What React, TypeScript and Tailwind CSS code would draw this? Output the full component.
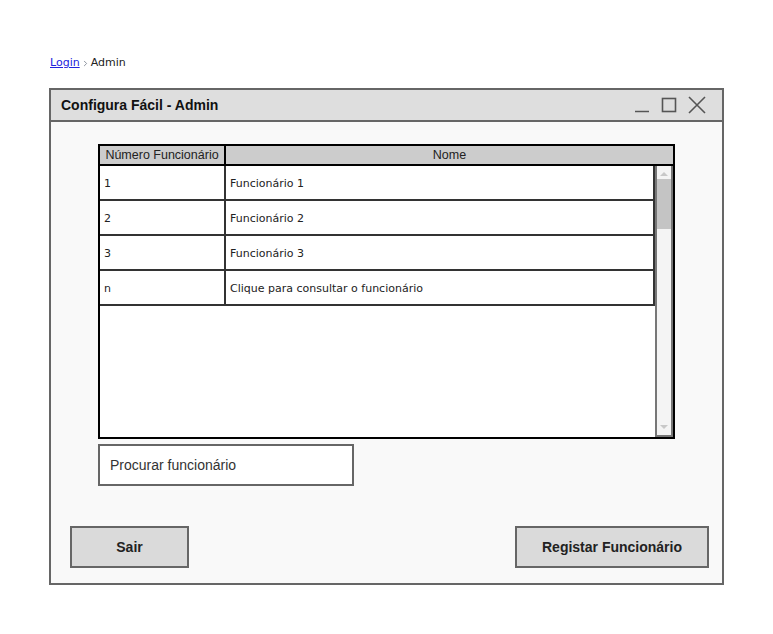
import { ChevronRight } from 'lucide-react';

const rows = [
    { num: '1', nome: 'Funcionário 1' },
    { num: '2', nome: 'Funcionário 2' },
    { num: '3', nome: 'Funcionário 3' },
    { num: 'n', nome: 'Clique para consultar o funcionário' },
];

const hand = { fontFamily: '"Comic Sans MS", "DejaVu Sans", sans-serif' };

export default function App() {
    return (
        <div className="w-[773px] h-[634px] bg-white font-['Liberation_Sans',Arial,sans-serif] relative">
            <div className="pt-[56px] pl-[50px] h-[88px] flex items-start text-[11px] leading-[14px]" style={hand}>
                <span className="text-[#2222dd] underline">Login</span>
                <ChevronRight className="w-[9px] h-[9px] mx-[1px] mt-[3px] text-gray-500" />
                <span className="text-[#222]">Admin</span>
            </div>

            <div className="ml-[49px] w-[675px] h-[497px] border-2 border-[#666] bg-[#f9f9f9] flex flex-col">
                <div className="h-[32px] bg-[#dedede] border-b-2 border-[#666] flex items-center justify-between pl-[10px] pr-[16px]">
                    <span className="text-[14px] font-bold text-[#111]">Configura Fácil - Admin</span>
                    <div className="flex items-center gap-[11px] text-[#555]">
                        <svg width="16" height="16" viewBox="0 0 16 16"><path d="M1 14.5h14" stroke="#555" strokeWidth="1.5" /></svg>
                        <svg width="16" height="16" viewBox="0 0 16 16"><rect x="1.5" y="1.5" width="13" height="13" fill="none" stroke="#555" strokeWidth="1.6" /></svg>
                        <svg width="18" height="18" viewBox="0 0 18 18"><path d="M1 1L17 17M17 1L1 17" stroke="#555" strokeWidth="1.6" /></svg>
                    </div>
                </div>

                <div className="pl-[47px] pt-[22px] flex flex-col">
                    <div className="w-[577px] h-[295px] border-2 border-black bg-white flex flex-col">
                        <div className="h-[20px] bg-[#cccccc] border-b-2 border-black flex text-[12.5px] text-[#222] leading-[18px]">
                            <div className="w-[126px] border-r-2 border-black text-center">Número Funcionário</div>
                            <div className="flex-1 text-center">Nome</div>
                        </div>
                        <div className="flex flex-1">
                            <div className="flex-1 flex flex-col">
                                {rows.map((r) => (
                                    <div key={r.num} className="h-[35px] flex border-b-2 border-[#333] text-[11px] text-[#222]" style={hand}>
                                        <div className="w-[126px] border-r-2 border-[#333] flex items-center pl-[4px] pt-[3px]">{r.num}</div>
                                        <div className="flex-1 flex items-center pl-[4px] pt-[3px] border-r-2 border-[#333]">{r.nome}</div>
                                    </div>
                                ))}
                            </div>
                            <div className="w-[18px] bg-[#f4f4f4] border-2 border-[#777] border-t-0 flex flex-col items-center justify-between">
                                <div className="w-full flex flex-col items-center">
                                    <svg width="10" height="8" viewBox="0 0 10 8" className="mt-[4px]"><path d="M1 6L5 2L9 6Z" fill="#c8c8c8" /></svg>
                                    <div className="w-full h-[50px] bg-[#c4c4c4] mt-[1px]" />
                                </div>
                                <svg width="10" height="8" viewBox="0 0 10 8" className="mb-[4px]"><path d="M1 2L5 6L9 2Z" fill="#c8c8c8" /></svg>
                            </div>
                        </div>
                    </div>

                    <div className="mt-[5px] w-[256px] h-[42px] border-2 border-[#666] bg-white flex items-center pl-[10px] text-[14px] text-[#333]">
                        Procurar funcionário
                    </div>
                </div>

                <div className="mt-[40px] pl-[19px] pr-[13px] flex justify-between">
                    <button className="w-[119px] h-[42px] bg-[#dadada] border-2 border-[#666] text-[14px] font-bold text-[#222]">Sair</button>
                    <button className="w-[194px] h-[42px] bg-[#dadada] border-2 border-[#666] text-[14px] font-bold text-[#222]">Registar Funcionário</button>
                </div>
            </div>
        </div>
    );
}
